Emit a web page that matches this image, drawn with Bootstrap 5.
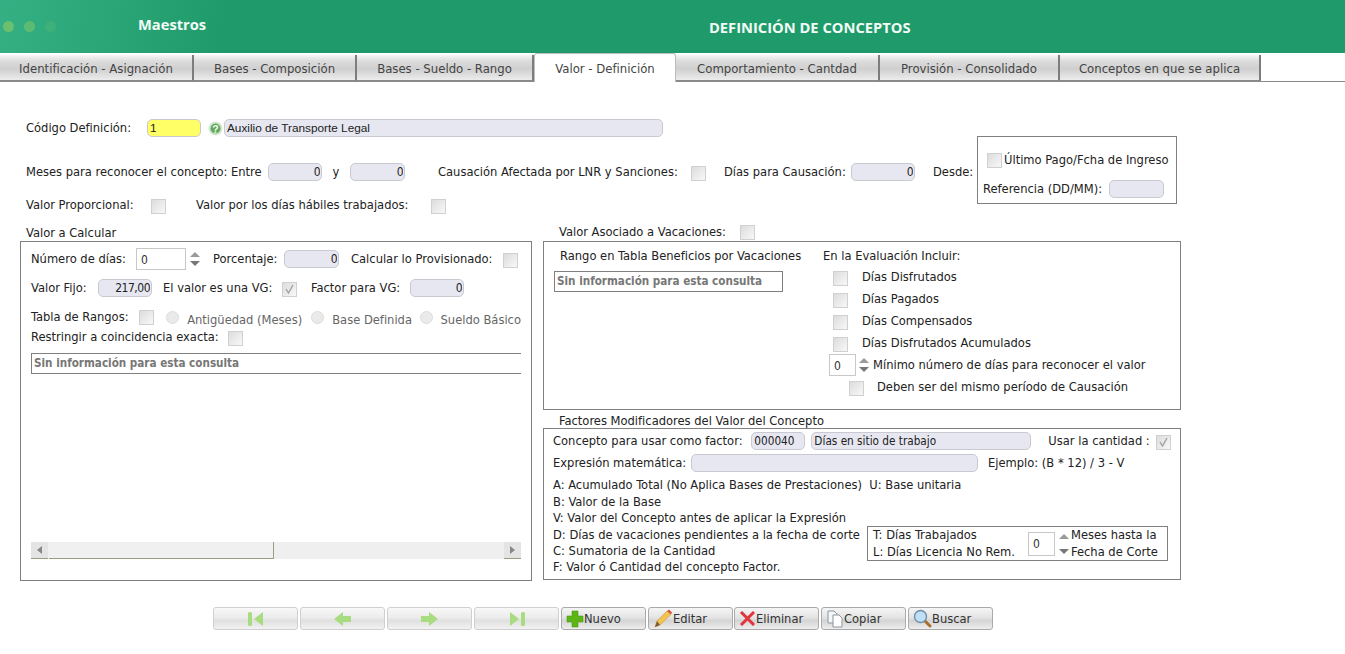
<!DOCTYPE html>
<html lang="es">
<head>
<meta charset="utf-8">
<title>Definición de Conceptos</title>
<link rel="stylesheet" href="https://cdn.jsdelivr.net/npm/bootstrap@5.3.0/dist/css/bootstrap.min.css">
<style>
html,body{height:654px;overflow:hidden}
body{background:#fff;color:#222;font:12.8px/16px "DejaVu Sans Condensed","DejaVu Sans",sans-serif;font-stretch:condensed}
.hdr{height:53px;background:linear-gradient(100deg,#35b084 0,#2aa677 8%,#1f9b6b 17%,#1f9b6b 100%);color:#f2fbf6;font:700 14.7px/18px "Open Sans",sans-serif}
.dot{width:11px;height:11px;border-radius:50%;background:#6cbf6e}
.dots{width:138px;padding-left:3px;gap:10px}
.hdr-left{width:495px}
.hdr-name{padding-bottom:5px}
.hdr-ttl{padding-left:214px;padding-top:1px}
.tabs{height:29px;border-bottom:1px solid #8a8a8a;padding-top:2px;flex-wrap:nowrap;margin:0}
.tabs .nav-link{height:26px;margin:0;padding:0;border:0;border-right:2px solid #7d7d7d;border-bottom:1px solid #8a8a8a;border-radius:0;color:#444;font-size:13px;line-height:27px;text-align:center;background:linear-gradient(#f6f6f6 0,#dcdcdc 25%,#cfcfcf 55%,#ececec 100%);white-space:nowrap}
.tabs .nav-link.active{height:29px;margin-top:-2px;line-height:29px;background:#fff;border:1px solid #bdbdbd;border-bottom:0;border-radius:3px 3px 0 0;color:#444}
.fld{display:inline-block;height:18px;padding:0 2px;border:1px solid #c9c9d2;border-radius:5px;background:#e7e7f1;color:#222;font:12px/16px "DejaVu Sans Condensed","DejaVu Sans",sans-serif;min-height:0;box-shadow:none;flex:none}
.num{text-align:right;letter-spacing:-.5px;padding-right:1px}
.arial{font-family:"Liberation Sans",sans-serif;font-size:11.8px}
.sm-f{font-size:11.7px}
.yel{background:#ffff66}
.chk{appearance:none;-webkit-appearance:none;display:block;flex:none;width:15px;height:15px;margin:3px 0 0;border:1px solid #d0d0d0;background:linear-gradient(135deg,#dcdcdc,#f8f8f8)}
.chkw{position:relative;display:block;flex:none;width:15px;height:15px;margin-top:3px}
.chkw .chk{margin:0}
.chkw svg{position:absolute;left:2px;top:2px}
.rad{appearance:none;-webkit-appearance:none;display:block;flex:none;width:13px;height:13px;margin:0;border:1px solid #dcdcdc;border-radius:50%;background:#eaeaea}
.top{height:123px}
.top-l{width:977px;padding-left:26px}
.r1{height:18px;margin-top:37px}
.r2{height:18px;margin-top:26px}
.r3{height:18px;margin-top:15px}
.desde{width:200px;height:68px;margin-top:54px;border:1px solid #808080;padding:0 5px}
.lgd{height:18px;line-height:20px}
.pnl{border:1px solid #808080;position:relative}
.cols{height:358px;padding-left:20px;margin-top:18px}
.cl{width:512px;margin-right:11px}
.cr{width:638px}
.p-l{height:340px;padding:5px 10px 0}
.p-v{height:169px;padding:6px 10px 0}
.p-f{height:152px;padding:3px 9px 0}
.spin{width:50px;height:22px;border:1px solid #c8c8c8;background:#fff;padding:2px 4px 0;display:block;flex:none;font:12px/18px "DejaVu Sans Condensed","DejaVu Sans",sans-serif;color:#333}
.arr{display:flex;flex-direction:column;justify-content:center;gap:4px;flex:none;width:10px}
.up,.dn{display:block;width:0;height:0;border-left:5px solid transparent;border-right:5px solid transparent}
.up{border-bottom:5px solid #9a9a9a}
.dn{border-top:5px solid #777}
.grid-e{height:21px;border:1px solid #808080;color:#777;font:700 11.6px/19px "DejaVu Sans Condensed","DejaVu Sans",sans-serif;padding-left:2px;white-space:nowrap}
.scr{height:17px;margin-top:168px;background:#efefef;width:490px}
.scr-b{width:17px;border-bottom:1px solid #9c9c80;display:flex;align-items:center;justify-content:center;background:#e4e4e4}
.scr-t{width:225px;margin-left:1px;border-bottom:1px solid #9c9c80;border-right:1px solid #9c9c80;background:#f0f0f0}
.tri-l,.tri-r{width:0;height:0;border-top:4px solid transparent;border-bottom:4px solid transparent}
.tri-l{border-right:5px solid #888}
.tri-r{border-left:5px solid #888}
.txt{white-space:nowrap}
.dim{color:#666;padding-top:5px}
.lh{line-height:16.5px}
.t-box{width:301px;border:1px solid #808080;padding:1px 5px;flex:none;margin-left:6px;margin-top:-1px;height:35px}
.nav-b{height:23px;padding:0;width:85px;margin-right:2px;border:1px solid #c4c4c4;border-radius:3px;background:linear-gradient(#f5f5f5,#e4e4e4 45%,#d4d4d4 60%,#eeeeee);color:#333;font:12.8px/20px "DejaVu Sans Condensed","DejaVu Sans",sans-serif;display:flex;align-items:center;justify-content:center;flex:none}
.nav-b:disabled{opacity:1;border-color:#cfcfcf;background:linear-gradient(#f8f8f8,#ececec 45%,#e0e0e0 60%,#f2f2f2)}
.on{border-color:#aaa;justify-content:flex-start;padding-left:4px}
.bar{padding-left:213px;margin-top:26px}
.mr1{margin-right:1px}
</style>
</head>
<body>
<header class="hdr d-flex">
  <div class="hdr-left d-flex align-items-center">
    <div class="dots d-flex">
      <span class="dot"></span><span class="dot opacity-75"></span><span class="dot opacity-25"></span>
    </div>
    <div class="hdr-name">Maestros</div>
  </div>
  <div class="hdr-ttl d-flex align-items-center">DEFINICIÓN DE CONCEPTOS</div>
</header>
<ul class="nav nav-tabs tabs">
  <li class="nav-item"><a class="nav-link" style="width:194px" href="#">Identificación - Asignación</a></li>
  <li class="nav-item"><a class="nav-link" style="width:163px" href="#">Bases - Composición</a></li>
  <li class="nav-item"><a class="nav-link" style="width:177px" href="#">Bases - Sueldo - Rango</a></li>
  <li class="nav-item"><a class="nav-link active" style="width:142px" href="#">Valor - Definición</a></li>
  <li class="nav-item"><a class="nav-link" style="width:204px" href="#">Comportamiento - Cantdad</a></li>
  <li class="nav-item"><a class="nav-link" style="width:180px" href="#">Provisión - Consolidado</a></li>
  <li class="nav-item"><a class="nav-link" style="width:201px" href="#">Conceptos en que se aplica</a></li>
</ul>

<section class="top d-flex">
  <div class="top-l">
    <div class="r1 d-flex align-items-center">
      <span class="txt" style="width:121px">Código Definición:</span>
      <input class="fld yel arial" style="width:54px" value="1">
      <svg style="margin-left:7px" width="15" height="15" viewBox="0 0 15 15"><circle cx="7.500" cy="7.500" r="7" fill="#d4e8d4"/><circle cx="7.500" cy="7.500" r="5" fill="#62aa5e"/><text x="7.500" y="11.500" font-size="10.500" font-weight="700" text-anchor="middle" fill="#f4fbf4" font-family="Liberation Sans">?</text></svg>
      <input class="fld arial" style="width:439px;margin-left:1px" value="Auxilio de Transporte Legal">
    </div>
    <div class="r2 d-flex align-items-center">
      <span class="txt" style="width:242px">Meses para reconocer el concepto: Entre</span>
      <input class="fld num" style="width:54px" value="0">
      <span style="width:28px;text-align:center">y</span>
      <input class="fld num" style="width:55px" value="0">
      <span class="txt" style="margin-left:33px;width:253px">Causación Afectada por LNR y Sanciones:</span>
      <input type="checkbox" class="chk" disabled>
      <span class="txt" style="margin-left:18px;width:127px">Días para Causación:</span>
      <input class="fld num" style="width:64px" value="0">
      <span class="txt" style="margin-left:18px">Desde:</span>
    </div>
    <div class="r3 d-flex align-items-center">
      <span class="txt" style="width:125px">Valor Proporcional:</span>
      <input type="checkbox" class="chk" disabled>
      <span class="txt" style="margin-left:30px;width:235px">Valor por los días hábiles trabajados:</span>
      <input type="checkbox" class="chk" disabled>
    </div>
  </div>
  <div class="desde">
    <div class="d-flex align-items-center" style="height:20px;margin-top:13px;padding-left:4px"><input type="checkbox" class="chk" style="margin-top:0" disabled><span class="txt" style="margin-left:2px">Último Pago/Fcha de Ingreso</span></div>
    <div class="d-flex align-items-center" style="height:18px;margin-top:10px"><span class="txt" style="width:126px">Referencia (DD/MM):</span><input class="fld" style="width:55px"></div>
  </div>
</section>

<main class="cols d-flex">
  <div class="cl">
    <div class="lgd" style="padding-left:6px">Valor a Calcular</div>
    <div class="pnl p-l">
      <div class="d-flex align-items-center" style="height:24px">
        <span class="txt" style="width:105px">Número de días:</span>
        <span class="spin">0</span>
        <span class="arr" style="margin-left:4px"><i class="up"></i><i class="dn"></i></span>
        <span class="txt" style="margin-left:13px;width:71px">Porcentaje:</span>
        <input class="fld num" style="width:55px" value="0">
        <span class="txt" style="margin-left:12px;width:152px">Calcular lo Provisionado:</span>
        <input type="checkbox" class="chk" disabled>
      </div>
      <div class="d-flex align-items-center" style="height:18px;margin-top:8px">
        <span class="txt" style="width:67px">Valor Fijo:</span>
        <input class="fld num" style="width:54px" value="217,00">
        <span class="txt" style="margin-left:11px;width:119px">El valor es una VG:</span>
        <span class="chkw"><input type="checkbox" class="chk" checked disabled><svg width="11" height="11" viewBox="0 0 11 11"><path d="M2 5l2.500 4L9 1" fill="none" stroke="#a0a0a0" stroke-width="1.400"/></svg></span>
        <span class="txt" style="margin-left:14px;width:99px">Factor para VG:</span>
        <input class="fld num" style="width:54px" value="0">
      </div>
      <div class="d-flex align-items-center" style="height:18px;margin-top:11px">
        <span class="txt" style="width:109px">Tabla de Rangos:</span>
        <input type="checkbox" class="chk" style="margin-top:0" disabled>
        <input type="radio" class="rad" style="margin-left:12px" disabled>
        <span class="txt dim" style="margin-left:8px;width:125px">Antigüedad (Meses)</span>
        <input type="radio" class="rad" disabled>
        <span class="txt dim" style="margin-left:8px;width:88px">Base Definida</span>
        <input type="radio" class="rad" disabled>
        <span class="txt dim" style="margin-left:8px">Sueldo Básico</span>
      </div>
      <div class="d-flex align-items-center" style="height:16px;margin-top:3px">
        <span class="txt" style="width:197px">Restringir a coincidencia exacta:</span>
        <input type="checkbox" class="chk" disabled>
      </div>
      <div class="grid-e" style="margin-top:8px;border-right:0;width:490px">Sin información para esta consulta</div>
      <div class="scr d-flex">
        <div class="scr-b"><i class="tri-l"></i></div>
        <div class="scr-t"></div>
        <div class="flex-grow-1"></div>
        <div class="scr-b"><i class="tri-r"></i></div>
      </div>
    </div>
  </div>
  <div class="cr">
    <div class="lgd d-flex align-items-center" style="padding-left:16px">
      <span class="txt" style="width:181px">Valor Asociado a Vacaciones:</span>
      <input type="checkbox" class="chk" style="margin-top:0" disabled>
    </div>
    <div class="pnl p-v d-flex">
      <div style="width:269px">
        <div class="txt" style="padding-left:6px;height:16px">Rango en Tabla Beneficios por Vacaciones</div>
        <div class="grid-e" style="margin-top:7px;width:229px">Sin información para esta consulta</div>
      </div>
      <div>
        <div class="txt" style="height:16px">En la Evaluación Incluir:</div>
        <div class="d-flex align-items-center" style="height:22px;margin-top:2px;padding-left:10px"><input type="checkbox" class="chk" disabled><span class="txt" style="margin-left:14px">Días Disfrutados</span></div>
        <div class="d-flex align-items-center" style="height:22px;padding-left:10px"><input type="checkbox" class="chk" disabled><span class="txt" style="margin-left:14px">Días Pagados</span></div>
        <div class="d-flex align-items-center" style="height:22px;padding-left:10px"><input type="checkbox" class="chk" disabled><span class="txt" style="margin-left:14px">Días Compensados</span></div>
        <div class="d-flex align-items-center" style="height:22px;padding-left:10px"><input type="checkbox" class="chk" disabled><span class="txt" style="margin-left:14px">Días Disfrutados Acumulados</span></div>
        <div class="d-flex align-items-center" style="height:22px;padding-left:6px"><span class="spin" style="width:27px;height:22px">0</span><span class="arr" style="margin-left:3px"><i class="up"></i><i class="dn"></i></span><span class="txt" style="margin-left:4px">Mínimo número de días para reconocer el valor</span></div>
        <div class="d-flex align-items-center" style="height:22px;padding-left:26px"><input type="checkbox" class="chk" disabled><span class="txt" style="margin-left:13px">Deben ser del mismo período de Causación</span></div>
      </div>
    </div>
    <div class="lgd" style="padding-left:16px;height:18px;line-height:22px">Factores Modificadores del Valor del Concepto</div>
    <div class="pnl p-f">
      <div class="d-flex align-items-center" style="height:18px">
        <span class="txt" style="width:199px">Concepto para usar como factor:</span>
        <input class="fld sm-f" style="width:54px" value="000040">
        <input class="fld sm-f" style="width:220px;margin-left:6px" value="Días en sitio de trabajo">
        <span class="txt" style="margin-left:17px;width:108px">Usar la cantidad :</span>
        <span class="chkw"><input type="checkbox" class="chk" checked disabled><svg width="11" height="11" viewBox="0 0 11 11"><path d="M2 5l2.500 4L9 1" fill="none" stroke="#a0a0a0" stroke-width="1.400"/></svg></span>
      </div>
      <div class="d-flex align-items-center" style="height:18px;margin-top:4px">
        <span class="txt" style="width:138px">Expresión matemática:</span>
        <input class="fld" style="width:287px">
        <span class="txt" style="margin-left:10px">Ejemplo: (B * 12) / 3 - V</span>
      </div>
      <div class="txt lh" style="margin-top:5px;height:17px">A: Acumulado Total (No Aplica Bases de Prestaciones)&nbsp; U: Base unitaria</div>
      <div class="txt lh" style="height:16px">B: Valor de la Base</div>
      <div class="txt lh" style="height:17px">V: Valor del Concepto antes de aplicar la Expresión</div>
      <div class="d-flex" style="height:32px">
        <div style="width:308px">
          <div class="txt lh" style="height:16px">D: Días de vacaciones pendientes a la fecha de corte</div>
          <div class="txt lh" style="height:16px">C: Sumatoria de la Cantidad</div>
        </div>
        <div class="t-box d-flex align-items-center">
          <div style="width:155px"><div class="txt lh">T: Días Trabajados</div><div class="txt lh">L: Días Licencia No Rem.</div></div>
          <span class="spin" style="width:27px;height:24px">0</span>
          <span class="arr" style="margin-left:4px;gap:10px"><i class="up"></i><i class="dn"></i></span>
          <div style="margin-left:2px"><div class="txt lh">Meses hasta la</div><div class="txt lh">Fecha de Corte</div></div>
        </div>
      </div>
      <div class="txt lh" style="height:16px">F: Valor ó Cantidad del concepto Factor.</div>
    </div>
  </div>
</main>

<div class="bar d-flex">
  <button class="btn nav-b" disabled aria-label="Primero"><svg width="18" height="16" viewBox="0 0 18 16"><rect x="1" y="1" width="4" height="14" rx="1.500" fill="#a8dc80"/><path d="M7 8l9-7v14z" fill="#a8dc80"/></svg></button>
  <button class="btn nav-b" disabled aria-label="Anterior"><svg width="19" height="16" viewBox="0 0 19 16"><path d="M1 8l9-7v4h8v6h-8v4z" fill="#a8dc80"/></svg></button>
  <button class="btn nav-b" disabled aria-label="Siguiente"><svg width="19" height="16" viewBox="0 0 19 16"><path d="M18 8L9 1v4H1v6h8v4z" fill="#a8dc80"/></svg></button>
  <button class="btn nav-b" disabled aria-label="Último"><svg width="18" height="16" viewBox="0 0 18 16"><rect x="13" y="1" width="4" height="14" rx="1.500" fill="#a8dc80"/><path d="M11 8L2 1v14z" fill="#a8dc80"/></svg></button>
  <button class="btn nav-b on"><svg width="18" height="18" viewBox="0 0 18 18"><path d="M6 1h6v5h5v6h-5v5H6v-5H1V6h5z" fill="#5cb515" stroke="#4a9a10" stroke-width=".600"/></svg><span>Nuevo</span></button>
  <button class="btn nav-b on mr1"><svg width="20" height="19" viewBox="0 0 20 19"><path d="M2 18l2-6L14 2l4 3.500L7 16z" fill="#f3c351" stroke="#c99b36" stroke-width=".600"/><path d="M14 2l2-1.500 3 3L18 5.500z" fill="#d8533f"/><path d="M2 18l2-6 3 4z" fill="#7a5b3a"/></svg><span>Editar</span></button>
  <button class="btn nav-b on"><svg width="17" height="15" viewBox="0 0 17 15"><path d="M2 1l13 13M15 1L2 14" fill="none" stroke="#e0373f" stroke-width="3"/></svg><span>Eliminar</span></button>
  <button class="btn nav-b on"><svg width="18" height="18" viewBox="0 0 18 18"><path d="M2 1h6l3 3v9H2z" fill="#f4f6f8" stroke="#8d959c"/><path d="M7 5h6l3 3v9H7z" fill="#fff" stroke="#8d959c"/></svg><span>Copiar</span></button>
  <button class="btn nav-b on"><svg width="19" height="19" viewBox="0 0 19 19"><path d="M11 11l6 6" stroke="#a9702b" stroke-width="3" stroke-linecap="round"/><circle cx="7.500" cy="7.500" r="6" fill="#bfe0f5" stroke="#6f8ea8" stroke-width="1.400"/></svg><span>Buscar</span></button>
</div>
</body>
</html>
